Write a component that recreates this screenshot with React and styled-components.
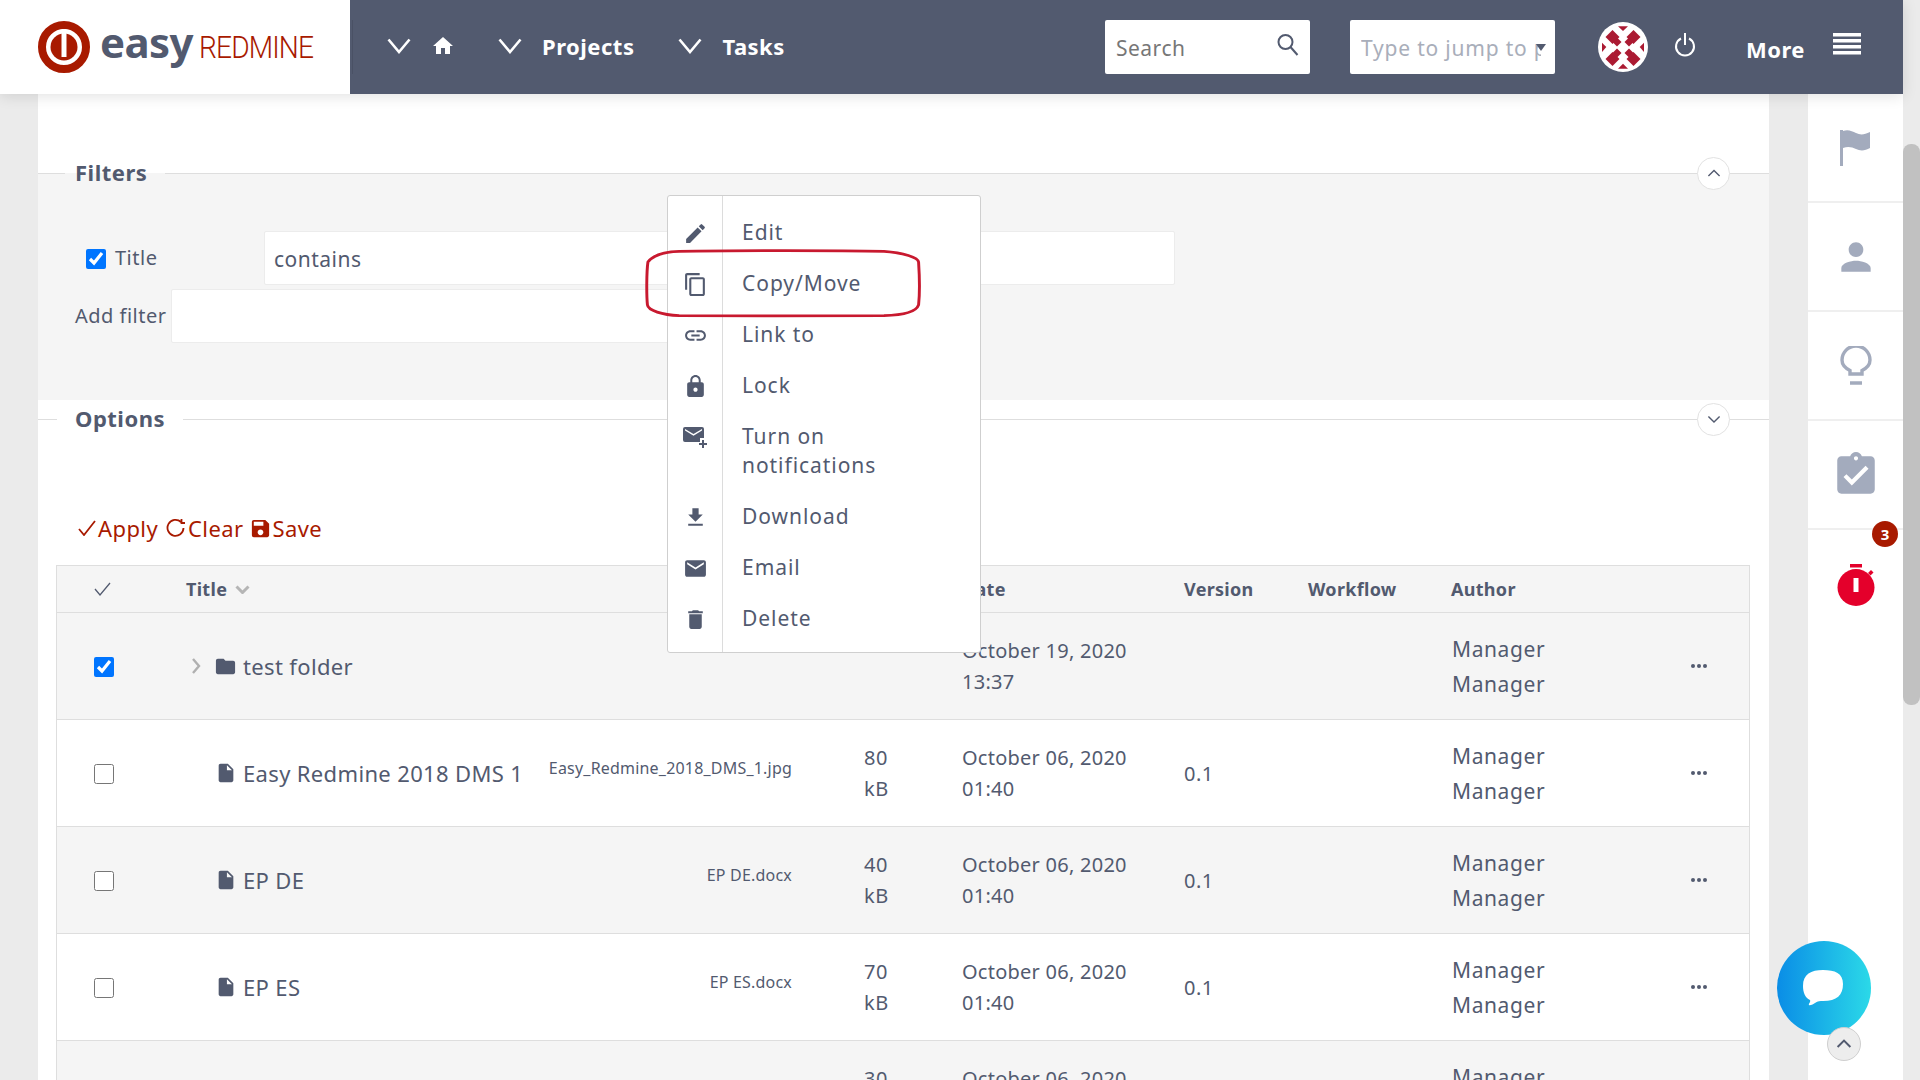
import React from "react";
import styled, { createGlobalStyle } from "styled-components";
import {
  MdEdit, MdContentCopy, MdLink, MdLock, MdFileDownload, MdEmail, MdDelete,
  MdHome, MdFolder, MdInsertDriveFile, MdSave, MdPerson, MdAssignmentTurnedIn,
} from "react-icons/md";

const INK = "#525a6f";
const RED = "#a81a00";
const ROW_COLS = "129px 355px 323px 98px 222px 124px 143px 185px 1fr";

const GlobalStyle = createGlobalStyle`
  html, body {
    margin: 0;
    height: 100%;
    overflow: hidden;
    background: #ebebeb;
  }
  body {
    font-family: "Noto Sans", "Open Sans", sans-serif;
    color: ${INK};
    font-size: 20px;
    letter-spacing: 0.5px;
  }
  * { box-sizing: border-box; }
`;

const Screen = styled.div`
  display: flex;
  width: 1920px;
  height: 1080px;
  overflow: hidden;
  position: relative;
`;

const Page = styled.div`
  width: 1903px;
  display: flex;
  flex-direction: column;
`;

const ScrollTrack = styled.div`
  width: 17px;
  padding-top: 144px;
  background: #ebebeb;
`;

const ScrollThumb = styled.div`
  height: 561px;
  background: #c1c1c1;
  border-radius: 8px;
`;

const Header = styled.header`
  height: 94px;
  flex: none;
  display: flex;
  background: ${INK};
  color: #fff;
  box-shadow: 0 2px 14px rgba(0, 0, 0, 0.12);
  position: relative;
  z-index: 2;
`;

const LogoBox = styled.div`
  width: 350px;
  flex: none;
  background: #fff;
  display: flex;
  align-items: center;
  padding-left: 37px;
`;

const LogoWords = styled.div`
  display: flex;
  align-items: baseline;
  margin: -10px 0 0 9px;
`;

const LogoEasy = styled.span`
  font-size: 42px;
  font-weight: 700;
  color: ${INK};
  letter-spacing: -0.6px;
  line-height: 1;
`;

const LogoRed = styled.span`
  font-family: "Roboto", sans-serif;
  font-size: 32px;
  font-weight: 300;
  color: ${RED};
  letter-spacing: -1px;
  line-height: 1;
  margin-left: 6px;
  transform: scaleX(0.88);
  transform-origin: left center;
`;

const NavDivider = styled.div`
  width: 1px;
  height: 54px;
  margin: 20px 0 0 2px;
  background: #4a5165;
`;

const Nav = styled.nav`
  display: flex;
  align-items: center;
  padding: 0 0 2px 34px;
`;

const NavItem = styled.div`
  display: flex;
  align-items: center;
  gap: 20px;
  margin-right: ${(p) => p.$mr || 0}px;
  font-weight: 700;
  font-size: 22px;
`;

const HeadRight = styled.div`
  margin-left: auto;
  display: flex;
  align-items: center;
`;

const HeadInput = styled.div`
  width: 205px;
  height: 54px;
  background: #fff;
  border-radius: 2px;
  display: flex;
  align-items: center;
  justify-content: space-between;
  padding: 1px 10px 0 11px;
  margin-right: ${(p) => p.$mr || 0}px;
  color: ${(p) => p.$color};
  font-size: 21px;
  white-space: nowrap;
  position: relative;
`;

const JumpText = styled.span`
  width: 180px;
  overflow: hidden;
  letter-spacing: 0.8px;
`;

const JumpCaret = styled.i`
  position: absolute;
  right: 9px;
  top: 24px;
  border-left: 5px solid transparent;
  border-right: 5px solid transparent;
  border-top: 7px solid ${INK};
`;

const SearchIcon = styled.svg`
  margin-top: -5px;
`;

const Avatar = styled.svg`
  width: 50px;
  height: 50px;
  margin-left: 43px;
`;

const PowerIcon = styled.svg`
  margin: -4px 50px 0 26px;
`;

const MoreLabel = styled.span`
  font-weight: 700;
  font-size: 22px;
  margin: 3px 28px 0 0;
`;

const BurgerIcon = styled.svg`
  margin: -6px 42px 0 0;
`;

const Body = styled.div`
  flex: 1;
  display: flex;
  min-height: 0;
`;

const Gutter = styled.div`
  width: ${(p) => p.$w}px;
  background: #ebebeb;
`;

const Main = styled.main`
  width: 1731px;
  background: #fff;
  overflow: hidden;
`;

const Legend = styled.div`
  display: flex;
  align-items: center;
  height: 0;
  margin-top: ${(p) => p.$top}px;
`;

const LegendLine = styled.div`
  height: 1px;
  background: #dedede;
  width: ${(p) => (p.$grow ? "auto" : p.$w + "px")};
  flex: ${(p) => (p.$grow ? 1 : "none")};
`;

const LegendText = styled.span`
  font-weight: 700;
  font-size: 22px;
  padding: 0 18px 2px ${(p) => p.$pl || 10}px;
`;

const Toggle = styled.div`
  width: 33px;
  height: 33px;
  border-radius: 50%;
  background: #fff;
  border: 1px solid #e2e2e2;
  display: flex;
  align-items: center;
  justify-content: center;
  margin: 0 39px 0 -72px;
  position: relative;
`;

const FiltersBox = styled.section`
  height: 227px;
  background: #f5f5f5;
  padding: 58px 0 0 37px;
`;

const FilterRow = styled.div`
  display: flex;
  align-items: center;
  height: 54px;
  margin-top: ${(p) => p.$mt || 0}px;
`;

const FilterLabel = styled.span`
  width: ${(p) => p.$w}px;
  font-size: 20px;
  margin-left: ${(p) => p.$ml || 0}px;
  margin-top: -2px;
`;

const WhiteInput = styled.div`
  width: ${(p) => p.$w}px;
  height: 54px;
  background: #fff;
  border: 1px solid #ececec;
  border-radius: 2px;
  padding: 1px 0 0 9px;
  display: flex;
  align-items: center;
  font-size: 21px;
`;

const Tick = styled.input.attrs({ type: "checkbox", readOnly: true })`
  width: 20px;
  height: 20px;
  margin: 1px 0 0 ${(p) => p.$ml || 0}px;
  accent-color: #0075ff;
`;

const Actions = styled.div`
  display: flex;
  align-items: center;
  height: 30px;
  margin: 94px 0 0 39px;
  color: ${RED};
  font-size: 22px;
  letter-spacing: 0.4px;
`;

const ActionLink = styled.span`
  display: flex;
  align-items: center;
  gap: ${(p) => p.$gap ?? 2}px;
  margin-right: ${(p) => p.$mr ?? 8}px;
`;

const Table = styled.div`
  margin: 22px 0 0 18px;
  width: 1694px;
  border: 1px solid #dedede;
  border-bottom: none;
`;

const Row = styled.div`
  display: grid;
  grid-template-columns: ${ROW_COLS};
  align-items: center;
  height: ${(p) => (p.$head ? 47 : 107)}px;
  background: ${(p) => (p.$shaded ? "#f5f5f5" : "#fff")};
  border-bottom: 1px solid #dedede;
  ${(p) => p.$head && "font-weight: 700; font-size: 18px; letter-spacing: 0.3px;"}
`;

const CheckCell = styled.div`
  padding-left: 37px;
  display: flex;
  align-items: center;
`;

const TitleCell = styled.div`
  display: flex;
  align-items: center;
  gap: 6px;
  font-size: 22px;
  letter-spacing: 0.35px;
  white-space: nowrap;
  padding-left: ${(p) => p.$pl || 0}px;
`;

const ExpandIcon = styled.svg`
  margin-right: 6px;
`;

const HeadTitle = styled.div`
  display: flex;
  align-items: center;
  gap: 8px;
`;

const FileName = styled.div`
  padding: 0 72px 10px 0;
  text-align: right;
  font-size: 16px;
  letter-spacing: 0.2px;
  white-space: nowrap;
`;

const Stack = styled.div`
  line-height: ${(p) => p.$lh}px;
  font-size: ${(p) => p.$fs || 20}px;
  letter-spacing: ${(p) => p.$ls ?? 0.5}px;
  white-space: nowrap;
`;

const AuthorStack = styled(Stack)`
  padding: 2px 0 0 1px;
`;

const Dots = styled.div`
  display: flex;
  justify-content: center;
  margin-left: 13px;
  gap: 2px;
`;

const Dot = styled.i`
  width: 4px;
  height: 4px;
  border-radius: 50%;
  background: ${INK};
`;

const Sidebar = styled.aside`
  width: 95px;
  background: #fff;
  position: relative;
`;

const SideItem = styled.div`
  height: 109px;
  display: flex;
  align-items: center;
  justify-content: center;
  color: #a3abbd;
  border-bottom: ${(p) => (p.$last ? "none" : "2px solid #efefef")};
`;

const Badge = styled.span`
  position: absolute;
  left: 64px;
  top: 427px;
  width: 26px;
  height: 26px;
  border-radius: 50%;
  background: ${RED};
  color: #fff;
  font-size: 15px;
  font-weight: 700;
  letter-spacing: 0;
  display: flex;
  align-items: center;
  justify-content: center;
`;

const Menu = styled.div`
  position: absolute;
  left: 667px;
  top: 195px;
  width: 314px;
  height: 458px;
  background: #fff;
  border: 1px solid #cfcfcf;
  border-radius: 3px;
  padding: 11px 0 10px;
  display: flex;
  flex-direction: column;
  z-index: 3;
  &::before {
    content: "";
    position: absolute;
    left: 54px;
    top: 0;
    bottom: 0;
    width: 1px;
    background: #dcdcdc;
  }
`;

const MenuItem = styled.div`
  display: flex;
  padding: 11px 40px 11px 0;
  line-height: 29px;
  font-size: 21px;
  letter-spacing: 0.95px;
`;

const MenuIcon = styled.span`
  width: 54px;
  flex: none;
  display: flex;
  justify-content: center;
  padding-top: 3px;
  height: 29px;
  margin-right: 20px;
`;

const Annotation = styled.svg`
  position: absolute;
  left: 645px;
  top: 249px;
  z-index: 4;
`;

const ChatBubble = styled.div`
  position: absolute;
  left: 1777px;
  top: 941px;
  width: 94px;
  height: 94px;
  border-radius: 50%;
  background: linear-gradient(90deg, #0a8de6, #2bd9e8);
  display: flex;
  align-items: center;
  justify-content: center;
  z-index: 5;
`;

const ScrollTop = styled.div`
  position: absolute;
  left: 1827px;
  top: 1027px;
  width: 34px;
  height: 34px;
  border-radius: 50%;
  background: #ededed;
  border: 1px solid #cfcfcf;
  display: flex;
  align-items: center;
  justify-content: center;
  z-index: 6;
`;

const Chevron = ({ up, size = 14, color = INK, w = 2 }) => (
  <svg width={size} height={size * 0.6} viewBox="0 0 10 6" fill="none">
    <path d={up ? "M1 5l4-4 4 4" : "M1 1l4 4 4-4"} stroke={color} strokeWidth={w * 0.5} />
  </svg>
);

const NavChevron = () => (
  <svg width="24" height="16" viewBox="0 0 24 16" fill="none">
    <path d="M1.500 1.500L12 14 22.500 1.500" stroke="#fff" strokeWidth="2.600" />
  </svg>
);

const Logo = () => (
  <svg width="54" height="54" viewBox="0 0 54 54">
    <circle cx="27" cy="27" r="22" fill="none" stroke={RED} strokeWidth="8" />
    <circle cx="27" cy="27" r="13.500" fill={RED} />
    <path d="M27 9v28" stroke="#fff" strokeWidth="5" />
  </svg>
);

const avatarTriangles = [
  "M20 4.300h10L25 9z",
  "M20 46.700h10L25 41.700z",
  "M4 20.700v9.300L8.300 25z",
  "M46 20.700v9.300L41.700 25z",
];
const avatarInner = [[19, 20], [31, 20], [19, 31], [31, 31]];
const avatarArms = [[14.5, 15], [35.5, 15], [14.5, 37], [35.5, 37]];

const SearchGlyph = () => (
  <SearchIcon width="24" height="24" viewBox="0 0 24 24" fill="none" stroke={INK} strokeWidth="2">
    <circle cx="9.500" cy="9" r="7" />
    <path d="M14.500 14l7 8" />
  </SearchIcon>
);

const EmailPlus = () => (
  <svg width="26" height="24" viewBox="0 0 26 24" fill={INK}>
    <path d="M3 2h17a2 2 0 0 1 2 2v9h-4v4H3a2 2 0 0 1-2-2V4a2 2 0 0 1 2-2zm8.500 8.800L20 5.500V4l-8.500 5L3 4v1.500z" fillRule="evenodd" />
    <path d="M20 15h2v3h3v2h-3v3h-2v-3h-3v-2h3z" />
  </svg>
);

const Flag = () => (
  <svg width="36" height="38" viewBox="0 0 36 38" fill="#a3abbd">
    <path d="M2 1h3v36H2z" />
    <path d="M5 2c5-2 9 0 13 2s8 2 14-1v16c-5 3-10 3-14 1s-8-3-13-1z" />
  </svg>
);

const Bulb = () => (
  <svg width="32" height="40" viewBox="0 0 32 40" fill="none" stroke="#a3abbd" strokeWidth="3.400">
    <path d="M10 28v-3.500C5 22 2 18 2 14a14 14 0 0 1 28 0c0 4-3 8-8 10.500V28z" />
    <path d="M10 37h12" strokeWidth="3.500" />
  </svg>
);

const Stopwatch = () => (
  <svg width="38" height="42" viewBox="0 0 38 42" fill="#e4002b">
    <path d="M13 0h12v3.500H13z" />
    <circle cx="19" cy="23.500" r="18.500" />
    <path d="M31 9l3-3 2.500 2.500-3 3z" />
    <path d="M16.500 14h5v14h-5z" fill="#fff" />
  </svg>
);

const menuItems = [
  { label: "Edit", icon: <MdEdit size={25} /> },
  { label: "Copy/Move", icon: <MdContentCopy size={25} /> },
  { label: "Link to", icon: <MdLink size={25} /> },
  { label: "Lock", icon: <MdLock size={25} /> },
  { label: "Turn on notifications", icon: <EmailPlus /> },
  { label: "Download", icon: <MdFileDownload size={25} /> },
  { label: "Email", icon: <MdEmail size={25} /> },
  { label: "Delete", icon: <MdDelete size={25} /> },
];

const rows = [
  { id: 1, title: "test folder", folder: true, shaded: true, checked: true, date: "October 19, 2020", time: "13:37" },
  { id: 2, title: "Easy Redmine 2018 DMS 1", file: "Easy_Redmine_2018_DMS_1.jpg", size: "80", date: "October 06, 2020", time: "01:40", version: "0.1" },
  { id: 3, title: "EP DE", file: "EP DE.docx", size: "40", shaded: true, date: "October 06, 2020", time: "01:40", version: "0.1" },
  { id: 4, title: "EP ES", file: "EP ES.docx", size: "70", date: "October 06, 2020", time: "01:40", version: "0.1" },
  { id: 5, size: "30", shaded: true, date: "October 06, 2020", time: "01:40" },
];

export default function App() {
  return (
    <Screen>
      <GlobalStyle />
      <Page>
        <Header>
          <LogoBox>
            <Logo />
            <LogoWords>
              <LogoEasy>easy</LogoEasy>
              <LogoRed>REDMINE</LogoRed>
            </LogoWords>
          </LogoBox>
          <NavDivider />
          <Nav>
            <NavItem $mr={43}>
              <NavChevron />
              <MdHome size={24} />
            </NavItem>
            <NavItem $mr={44}>
              <NavChevron />
              Projects
            </NavItem>
            <NavItem>
              <NavChevron />
              Tasks
            </NavItem>
          </Nav>
          <HeadRight>
            <HeadInput $mr={40} $color="#777">
              Search
              <SearchGlyph />
            </HeadInput>
            <HeadInput $color="#a9aeba">
              <JumpText>Type to jump to p</JumpText>
              <JumpCaret />
            </HeadInput>
            <Avatar viewBox="0 0 50 50">
              <circle cx="25" cy="25" r="25" fill="#fff" />
              {avatarTriangles.map((d) => <path key={d} d={d} fill="#ab1a32" />)}
              {avatarInner.map(([x, y]) => (
                <path key={`${x}-${y}`} d={`M${x} ${y - 4.5}l4.500 4.500-4.500 4.500-4.500-4.500z`} fill="#ab1a32" />
              ))}
              {avatarArms.map(([x, y]) => (
                <path key={`${x}-${y}`} d={`M${x} ${y - 7}l7 7-7 7-7-7z`} fill="#ab1a32" />
              ))}
            </Avatar>
            <PowerIcon width="22" height="26" viewBox="0 0 22 26" fill="none" stroke="#fff" strokeWidth="2">
              <path d="M7 6.500a9 9 0 1 0 8 0M11 1v12" />
            </PowerIcon>
            <MoreLabel>More</MoreLabel>
            <BurgerIcon width="28" height="22" viewBox="0 0 28 22" fill="#fff">
              <path d="M0 0h28v3.500H0zM0 6h28v3.500H0zM0 12h28v3.500H0zM0 18h28v3.500H0z" />
            </BurgerIcon>
          </HeadRight>
        </Header>
        <Body>
          <Gutter $w={38} />
          <Main>
            <Legend $top={79}>
              <LegendLine $w={27} />
              <LegendText>Filters</LegendText>
              <LegendLine $grow />
              <Toggle><Chevron up /></Toggle>
            </Legend>
            <FiltersBox>
              <FilterRow>
                <Tick $ml={11} defaultChecked />
                <FilterLabel $w={149} $ml={9}>Title</FilterLabel>
                <WhiteInput $w={911}>contains</WhiteInput>
              </FilterRow>
              <FilterRow $mt={4}>
                <FilterLabel $w={96}>Add filter</FilterLabel>
                <WhiteInput $w={500} />
              </FilterRow>
            </FiltersBox>
            <Legend $top={19}>
              <LegendLine $w={19} />
              <LegendText $pl={18}>Options</LegendText>
              <LegendLine $grow />
              <Toggle><Chevron /></Toggle>
            </Legend>
            <Actions>
              <ActionLink>
                <svg width="19" height="16" viewBox="0 0 19 16" fill="none" stroke={RED} strokeWidth="1.800"><path d="M2 9l5 6L18 1" /></svg>
                Apply
              </ActionLink>
              <ActionLink $mr={6}>
                <svg width="20" height="20" viewBox="0 0 20 20" fill="none" stroke={RED} strokeWidth="1.800"><path d="M17.500 10a8 8 0 1 1-2.500-6M15.500 1v4h3.500" /></svg>
                Clear
              </ActionLink>
              <ActionLink $gap={0}>
                <MdSave size={23} />
                Save
              </ActionLink>
            </Actions>
            <Table>
              <Row $head $shaded>
                <CheckCell>
                  <svg width="18" height="14" viewBox="0 0 18 14" fill="none" stroke={INK} strokeWidth="1.300"><path d="M1 7l5 6L16 1" /></svg>
                </CheckCell>
                <HeadTitle>Title <Chevron color="#b5b5b5" w={4} size={15} /></HeadTitle>
                <div />
                <div />
                <div>Date</div>
                <div>Version</div>
                <div>Workflow</div>
                <div>Author</div>
                <div />
              </Row>
              {rows.map((r) => (
                <Row key={r.id} $shaded={r.shaded}>
                  <CheckCell>
                    <Tick defaultChecked={r.checked} />
                  </CheckCell>
                  <TitleCell $pl={r.folder ? 4 : 29}>
                    {r.folder && (
                      <ExpandIcon width="12" height="18" viewBox="0 0 12 18" fill="none" stroke="#b0b0b0" strokeWidth="2.400">
                        <path d="M3 2l6 7-6 7" />
                      </ExpandIcon>
                    )}
                    {r.folder && <MdFolder size={23} />}
                    {r.file && <MdInsertDriveFile size={22} />}
                    {r.title}
                  </TitleCell>
                  <FileName>{r.file}</FileName>
                  <Stack $lh={31}>{r.size && <>{r.size}<br />kB</>}</Stack>
                  <Stack $lh={31} $ls={0.25}>{r.date}<br />{r.time}</Stack>
                  <div>{r.version}</div>
                  <div />
                  <AuthorStack $lh={35} $fs={21} $ls={0.6}>Manager<br />Manager</AuthorStack>
                  <Dots><Dot /><Dot /><Dot /></Dots>
                </Row>
              ))}
            </Table>
          </Main>
          <Gutter $w={39} />
          <Sidebar>
            <SideItem><Flag /></SideItem>
            <SideItem><MdPerson size={44} /></SideItem>
            <SideItem><Bulb /></SideItem>
            <SideItem><MdAssignmentTurnedIn size={50} /></SideItem>
            <SideItem $last><Stopwatch /></SideItem>
            <Badge>3</Badge>
          </Sidebar>
        </Body>
      </Page>
      <ScrollTrack><ScrollThumb /></ScrollTrack>
      <Menu>
        {menuItems.map((m) => (
          <MenuItem key={m.label}>
            <MenuIcon>{m.icon}</MenuIcon>
            <span>{m.label}</span>
          </MenuItem>
        ))}
      </Menu>
      <Annotation width="277" height="69" viewBox="0 0 284 74" preserveAspectRatio="none" fill="none">
        <path
          d="M35 2.500C90 1.500 200 1.500 245 2.500C265 4 280 9 280.500 14C281.500 30 281.500 50 280.500 60C278 68 262 71 245 71.500C200 72 90 71.500 35 71.500C18 70.500 3 66 2.500 60C1.500 50 1.500 25 3 14C8 7 20 3 35 2.500Z"
          stroke="#c8192f"
          strokeWidth="3"
        />
      </Annotation>
      <ChatBubble>
        <svg width="42" height="38" viewBox="0 0 42 38" fill="#fff">
          <path d="M20 1c12 0 20 3 20 14s-6 17-20 17c-3 0-5 0-8 2-3 2-5 2.500-6 2-1-1 2-3 1-5-5-2-7-8-7-14C0 5 8 1 20 1z" />
        </svg>
      </ChatBubble>
      <ScrollTop><Chevron up size={16} w={2.500} /></ScrollTop>
    </Screen>
  );
}
